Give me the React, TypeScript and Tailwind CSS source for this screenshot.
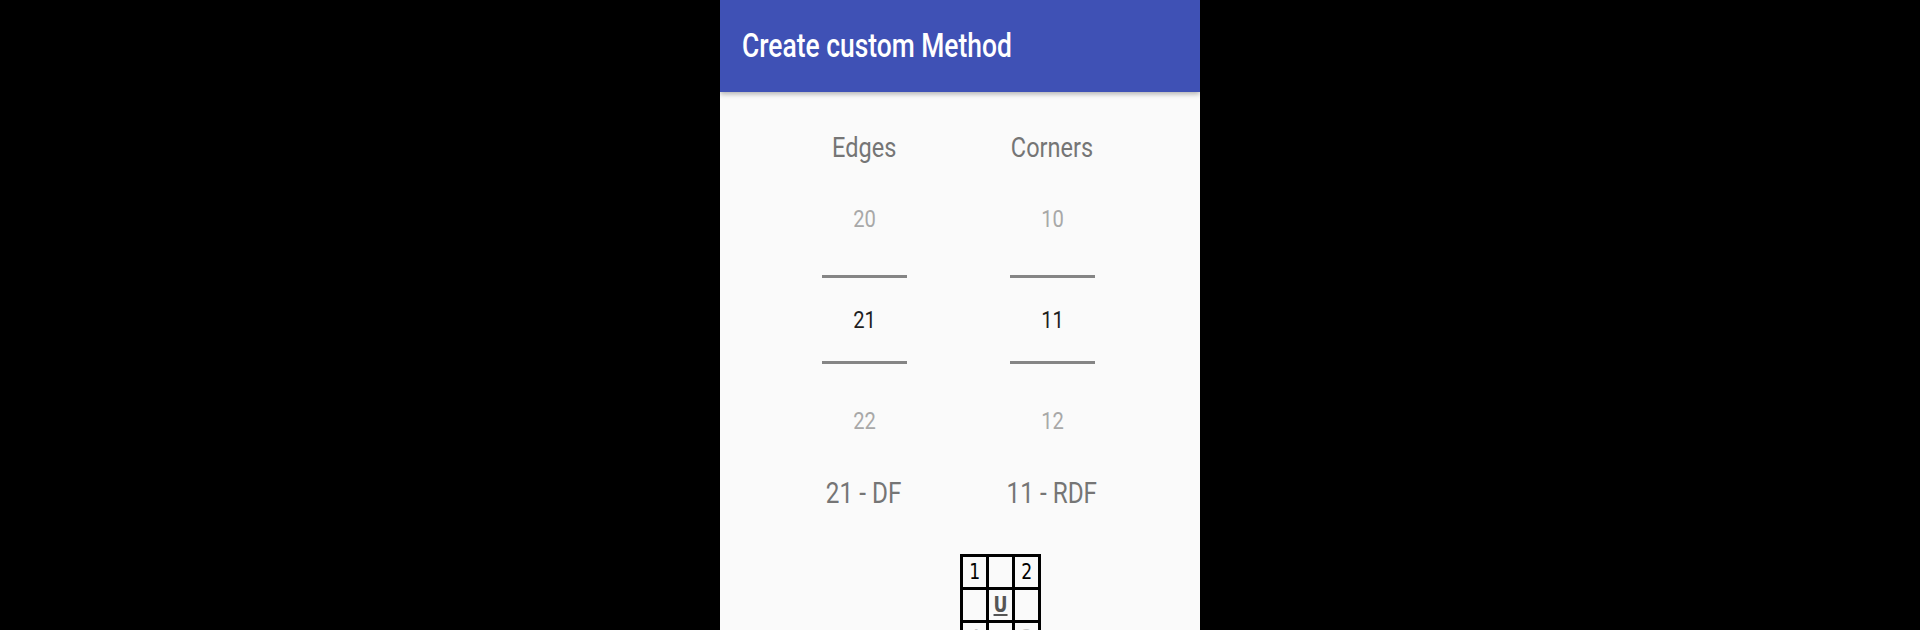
import React from 'react';

const Picker: React.FC<{ label: string; prev: string; value: string; next: string; result: string }> = ({ label, prev, value, next, result }) => (
  <div className="flex w-[188px] flex-col items-center">
    <div className="h-[28px] scale-x-[0.84] text-[28px] leading-[28px] text-[#757575]">{label}</div>
    <div className="mt-[6px] flex w-[85px] flex-col">
      <div className="flex h-[101px] items-center justify-center text-[24px] text-[#a8a8a8]">
        <span className="inline-block scale-x-[0.84]">{prev}</span>
      </div>
      <div className="mt-[6px] h-[3px] bg-[#858585]"></div>
      <div className="flex h-[83px] items-center justify-center text-[24px] text-[#1f1f1f]">
        <span className="inline-block scale-x-[0.84]">{value}</span>
      </div>
      <div className="h-[3px] bg-[#858585]"></div>
      <div className="mt-[6px] flex h-[101px] items-center justify-center text-[24px] text-[#a8a8a8]">
        <span className="inline-block scale-x-[0.84]">{next}</span>
      </div>
    </div>
    <div className="mt-[7px] h-[30px] scale-x-[0.81] text-[30px] leading-[30px] whitespace-nowrap text-[#757575]">{result}</div>
  </div>
);

const cells = ['1', '', '2', '', 'U', '', '4', '', '3'];

export default function App() {
  return (
    <div className="flex h-[630px] w-full justify-center bg-black" style={{ fontFamily: 'Roboto, "Noto Sans", sans-serif' }}>
      <div className="flex h-[630px] w-[480px] flex-col overflow-hidden bg-[#fafafa]">
        <div className="relative z-10 flex h-[92px] shrink-0 items-center bg-[#3f51b5] px-[22px] shadow-[0_2px_5px_rgba(0,0,0,0.3)]">
          <h1 className="origin-left scale-x-[0.8] whitespace-nowrap text-[33px] font-medium text-white">Create custom Method</h1>
        </div>
        <div className="flex justify-center pt-[42px] pr-[4px]">
          <Picker label="Edges" prev="20" value="21" next="22" result="21 - DF" />
          <Picker label="Corners" prev="10" value="11" next="12" result="11 - RDF" />
        </div>
        <div className="mt-[46px] pl-[240px]">
          <div className="grid w-fit grid-cols-3 gap-[3px] bg-black p-[3px]" style={{ fontFamily: '"DejaVu Sans", sans-serif' }}>
            {cells.map((c, i) => (
              <div
                key={i}
                className={
                  'flex h-[30px] w-[23px] items-center justify-center bg-[#fafafa] text-[21px] leading-none ' +
                  (c === 'U' ? 'font-bold text-[#555] underline underline-offset-2' : i > 5 ? 'text-[#c8c8c8]' : 'text-black')
                }
              >
                <span className="inline-block scale-x-[0.82]">{c}</span>
              </div>
            ))}
          </div>
        </div>
      </div>
    </div>
  );
}
